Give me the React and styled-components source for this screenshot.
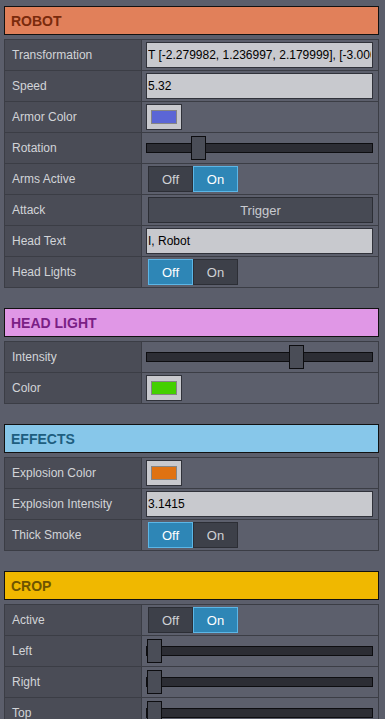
import React from 'react'
import styled, { createGlobalStyle } from 'styled-components'

const GlobalStyle = createGlobalStyle`
html, body {
    margin: 0;
    padding: 0;
    overflow: hidden;
    background: #5b5e6b;
    font-family: "Liberation Sans", Arial, sans-serif;
}
`

const sections = [
    {
        title: 'ROBOT', bg: '#e1805a', fg: '#7a2a0c',
        rows: [
            { label: 'Transformation', type: 'text', value: 'T [-2.279982, 1.236997, 2.179999], [-3.000000, 0.000000, 0.000000]' },
            { label: 'Speed', type: 'text', value: '5.32' },
            { label: 'Armor Color', type: 'color', value: '#5b66d6' },
            { label: 'Rotation', type: 'slider', value: 0.21 },
            { label: 'Arms Active', type: 'toggle', value: true },
            { label: 'Attack', type: 'button', value: 'Trigger' },
            { label: 'Head Text', type: 'text', value: 'I, Robot' },
            { label: 'Head Lights', type: 'toggle', value: false },
        ],
    },
    {
        title: 'HEAD LIGHT', bg: '#e097e6', fg: '#7a2085',
        rows: [
            { label: 'Intensity', type: 'slider', value: 0.676 },
            { label: 'Color', type: 'color', value: '#44d000' },
        ],
    },
    {
        title: 'EFFECTS', bg: '#87c7ea', fg: '#1e5e80',
        rows: [
            { label: 'Explosion Color', type: 'color', value: '#e07212' },
            { label: 'Explosion Intensity', type: 'text', value: '3.1415' },
            { label: 'Thick Smoke', type: 'toggle', value: false },
        ],
    },
    {
        title: 'CROP', bg: '#f0b800', fg: '#6e5400',
        rows: [
            { label: 'Active', type: 'toggle', value: true },
            { label: 'Left', type: 'slider', value: 0.005 },
            { label: 'Right', type: 'slider', value: 0.005 },
            { label: 'Top', type: 'slider', value: 0.005 },
            { label: 'Bottom', type: 'slider', value: 0.005 },
        ],
    },
]

const Control = ({ row }) => {
    switch (row.type) {
        case 'text':
            return <TextInput readOnly value={row.value} />
        case 'color':
            return <Swatch><SwatchColor $color={row.value} /></Swatch>
        case 'slider':
            return (
                <Slider>
                    <SliderTrack />
                    <SliderHandle $pos={row.value} />
                </Slider>
            )
        case 'toggle':
            return (
                <Toggle>
                    <ToggleBtn $active={!row.value}>Off</ToggleBtn>
                    <ToggleBtn $active={row.value}>On</ToggleBtn>
                </Toggle>
            )
        case 'button':
            return <TriggerBtn>{row.value}</TriggerBtn>
        default:
            return null
    }
}

const App = () => {
    return (
        <>
            <GlobalStyle />
            <Page>
                {sections.map(s => (
                    <Section key={s.title}>
                        <Header $bg={s.bg} $fg={s.fg}>{s.title}</Header>
                        <Table>
                            {s.rows.map(r => (
                                <Row key={r.label}>
                                    <Label>{r.label}</Label>
                                    <Value>
                                        <Control row={r} />
                                    </Value>
                                </Row>
                            ))}
                        </Table>
                    </Section>
                ))}
            </Page>
        </>
    )
}

const Page = styled.div`
padding: 6px 6px 0 4px;
display: flex;
flex-direction: column;
gap: 20px;
`
const Section = styled.div`
display: flex;
flex-direction: column;
gap: 4px;
`
const Header = styled.div`
box-sizing: border-box;
height: 29px;
padding-left: 6px;
display: flex;
align-items: center;
background: ${props => props.$bg};
color: ${props => props.$fg};
border: 1px solid #111;
font-size: 14px;
font-weight: bold;
`
const Table = styled.div`
display: flex;
flex-direction: column;
gap: 1px;
background: #3b3d45;
border: 1px solid #3b3d45;
`
const Row = styled.div`
height: 30px;
display: grid;
grid-template-columns: 136px 1fr;
column-gap: 1px;
`
const Label = styled.div`
padding-left: 7px;
display: flex;
align-items: center;
background: #4a4c56;
color: #d2d4d8;
font-size: 12px;
`
const Value = styled.div`
padding: 0 5px 0 4px;
display: flex;
align-items: center;
background: #5c5f6c;
`

// controls
const TextInput = styled.input`
box-sizing: border-box;
width: 100%;
height: 26px;
margin-bottom: 1px;
padding: 0 1px;
background: #c8c9ce;
color: #000;
border: 1px solid #30323a;
font-family: "Liberation Sans", Arial, sans-serif;
font-size: 12px;
outline: none;
`
const Swatch = styled.div`
box-sizing: border-box;
width: 36px;
height: 26px;
padding: 5px 0 0 4px;
background: #c8c9ce;
border: 1px solid #30323a;
`
const SwatchColor = styled.div`
box-sizing: border-box;
width: 26px;
height: 14px;
background: ${props => props.$color};
border: 1px solid #858585;
`
const Slider = styled.div`
width: 100%;
height: 24px;
display: flex;
align-items: center;
position: relative;
`
const SliderTrack = styled.div`
box-sizing: border-box;
width: 100%;
height: 10px;
background: #2c2d34;
border: 1px solid #0d0d10;
`
const SliderHandle = styled.div`
box-sizing: border-box;
width: 15px;
height: 24px;
position: absolute;
top: 0;
left: calc((100% - 15px) * ${props => props.$pos});
background: #4a4d57;
border: 1px solid #0d0d10;
`
const Toggle = styled.div`
margin-left: 2px;
display: flex;
`
const ToggleBtn = styled.div`
box-sizing: border-box;
width: 45px;
height: 26px;
display: flex;
align-items: center;
justify-content: center;
background: ${props => props.$active ? '#2e86b6' : '#3d4049'};
color: ${props => props.$active ? '#ffffff' : '#cfd1d5'};
border: 1px solid ${props => props.$active ? '#5cb6e6' : '#2c2e35'};
font-size: 13px;
`
const TriggerBtn = styled.div`
box-sizing: border-box;
margin-left: 2px;
width: 100%;
height: 26px;
display: flex;
align-items: center;
justify-content: center;
background: #474a54;
color: #c9cbd0;
border: 1px solid #2c2e35;
font-size: 13px;
`

export default App
